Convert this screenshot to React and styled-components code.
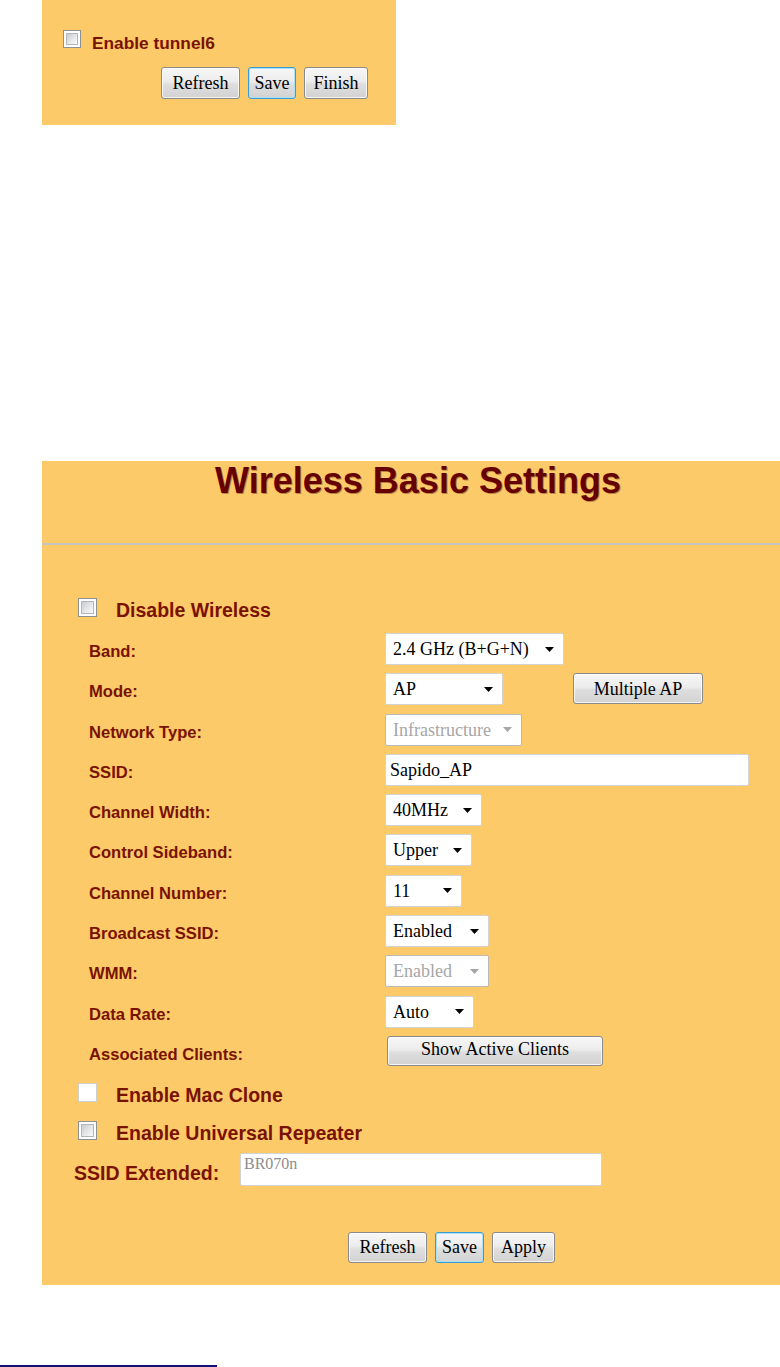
import React from 'react';
import styled, { createGlobalStyle, css } from 'styled-components';

const ORANGE = '#fcca68';
const MAROON = '#7a1202';
const SANS = '"Liberation Sans", Arial, sans-serif';
const SERIF = '"Liberation Serif", "Times New Roman", serif';

const GlobalStyle = createGlobalStyle`
  html, body { margin: 0; padding: 0; background: #fff; overflow: hidden; }
  body { font-family: ${SANS}; }
`;

const Page = styled.div`
  width: 780px;
  height: 1367px;
  display: flex;
  flex-direction: column;
`;

const TopPanel = styled.section`
  box-sizing: border-box;
  margin-left: 42px;
  width: 354px;
  height: 125px;
  background: ${ORANGE};
  padding: 30px 0 0 21px;
  display: flex;
  flex-direction: column;
`;

const Panel = styled.section`
  margin-top: 336px;
  margin-left: 42px;
  width: 738px;
  height: 824px;
  background: ${ORANGE};
  display: flex;
  flex-direction: column;
`;

const Title = styled.h1`
  margin: 0;
  height: 82px;
  padding-left: 14px;
  font: bold 36px/40px ${SANS};
  color: #660000;
  text-align: center;
  text-shadow: 1px 1px 0 rgba(60, 0, 0, 0.35);
`;

const Divider = styled.div`
  height: 2px;
  background: #c4c4c4;
`;

const CheckRow = styled.label`
  display: flex;
  align-items: flex-start;
  gap: ${(p) => p.$gap ?? 19}px;
  margin-top: ${(p) => p.$top}px;
  padding-left: ${(p) => p.$indent}px;
`;

const CheckBox = styled.span`
  position: relative;
  box-sizing: border-box;
  width: ${(p) => p.$size ?? 19}px;
  height: ${(p) => p.$size ?? 19}px;
  flex: none;
  border: 1px solid ${(p) => (p.$plain ? '#cfcfcf' : '#8e8f8f')};
  background: #fff;
  ${(p) =>
    !p.$plain &&
    css`
      &::after {
        content: '';
        position: absolute;
        inset: 2px;
        border: 1px solid #b2b6bb;
        background: linear-gradient(135deg, #c9ccd1 0%, #e6e7e9 55%, #fbfbfb 100%);
      }
    `}
`;

const CheckText = styled.span`
  margin-top: ${(p) => p.$shift ?? 1}px;
  font: bold ${(p) => p.$size ?? 19.5}px/22px ${SANS};
  color: ${MAROON};
  white-space: nowrap;
`;

const ButtonRow = styled.div`
  display: flex;
  gap: 8px;
  margin-top: ${(p) => p.$top}px;
  padding-left: ${(p) => p.$indent}px;
`;

const Button = styled.button`
  box-sizing: border-box;
  width: ${(p) => p.$w}px;
  height: ${(p) => p.$h ?? 32}px;
  margin: 0;
  margin-left: ${(p) => p.$ml ?? 0}px;
  padding: 0 0 ${(p) => p.$lift ?? 0}px;
  font: 18px/1 ${SERIF};
  color: #000;
  border: 1px solid #8a8a8a;
  border-radius: 3px;
  background: linear-gradient(#f7f7f7 0%, #ececec 45%, #dedede 55%, #d2d2d2 100%);
  box-shadow: inset 0 0 0 1px rgba(255, 255, 255, 0.75);
  white-space: nowrap;
  cursor: default;
  ${(p) =>
    p.$focus &&
    css`
      border-color: #3b9cd4;
      box-shadow: inset 0 0 0 1px #a8e0f8;
    `}
`;

const Form = styled.div`
  margin-top: 12px;
  padding-left: 47px;
  display: flex;
  flex-direction: column;
  gap: 8.3px;
`;

const FormRow = styled.div`
  display: grid;
  grid-template-columns: 296px auto;
  height: 32px;
`;

const Label = styled.span`
  font: bold 16.6px/38px ${SANS};
  color: ${MAROON};
  white-space: nowrap;
`;

const Control = styled.div`
  display: flex;
  align-items: flex-start;
  gap: ${(p) => p.$gap ?? 0}px;
`;

const SelectBox = styled.div`
  box-sizing: border-box;
  width: ${(p) => p.$w}px;
  height: 32px;
  padding: 0 9px 0 7px;
  display: flex;
  align-items: center;
  justify-content: space-between;
  background: #fff;
  border: 1px solid ${(p) => (p.$disabled ? '#b9b9b9' : '#d3d3d3')};
  border-radius: 2px;
  font: 18px/30px ${SERIF};
  color: ${(p) => (p.$disabled ? '#a6a6a6' : '#000')};
  white-space: nowrap;
`;

const TextBox = styled.div`
  box-sizing: border-box;
  width: ${(p) => p.$w}px;
  height: ${(p) => p.$h ?? 32}px;
  padding: ${(p) => (p.$muted ? '1px 0 0 3px' : '0 0 0 4px')};
  background: #fff;
  border: 1px solid #d3d3d3;
  border-radius: 2px;
  font: ${(p) => (p.$muted ? '16px/18px' : '18px/30px')} ${SERIF};
  color: ${(p) => (p.$muted ? '#8c8c8c' : '#000')};
  white-space: nowrap;
`;

const ExtRow = styled.div`
  display: grid;
  grid-template-columns: 166px auto;
  margin-top: 9px;
  padding-left: 32px;
  height: 33px;
`;

const ExtLabel = styled.span`
  font: bold 19.5px/40px ${SANS};
  color: ${MAROON};
  white-space: nowrap;
`;

const Footnote = styled.div`
  margin-top: 80px;
  width: 217px;
  height: 2px;
  background: #10107a;
`;

const Arrow = ({ disabled }) => (
  <svg width="9" height="5" viewBox="0 0 9 5" aria-hidden="true">
    <path d="M0 0 H9 L4.5 5 Z" fill={disabled ? '#a6a6a6' : '#000'} />
  </svg>
);

const Select = ({ w, value, disabled }) => (
  <SelectBox $w={w} $disabled={disabled}>
    <span>{value}</span>
    <Arrow disabled={disabled} />
  </SelectBox>
);

const rows = [
  { label: 'Band:', select: { w: 179, value: '2.4 GHz (B+G+N)' } },
  { label: 'Mode:', select: { w: 118, value: 'AP' }, extra: 'Multiple AP' },
  { label: 'Network Type:', select: { w: 137, value: 'Infrastructure', disabled: true } },
  { label: 'SSID:', input: 'Sapido_AP' },
  { label: 'Channel Width:', select: { w: 97, value: '40MHz' } },
  { label: 'Control Sideband:', select: { w: 87, value: 'Upper' } },
  { label: 'Channel Number:', select: { w: 77, value: '11' } },
  { label: 'Broadcast SSID:', select: { w: 104, value: 'Enabled' } },
  { label: 'WMM:', select: { w: 104, value: 'Enabled', disabled: true } },
  { label: 'Data Rate:', select: { w: 89, value: 'Auto' } },
  { label: 'Associated Clients:', button: 'Show Active Clients' },
];

export default function App() {
  return (
    <Page>
      <GlobalStyle />
      <TopPanel>
        <CheckRow $top={0} $indent={0} $gap={11}>
          <CheckBox $size={18} />
          <CheckText $size={17.3} $shift={2}>Enable tunnel6</CheckText>
        </CheckRow>
        <ButtonRow $top={13} $indent={98}>
          <Button $w={79}>Refresh</Button>
          <Button $w={48} $focus>Save</Button>
          <Button $w={64}>Finish</Button>
        </ButtonRow>
      </TopPanel>

      <Panel>
        <Title>Wireless Basic Settings</Title>
        <Divider />
        <CheckRow $top={53} $indent={36}>
          <CheckBox />
          <CheckText>Disable Wireless</CheckText>
        </CheckRow>

        <Form>
          {rows.map((r) => (
            <FormRow key={r.label}>
              <Label>{r.label}</Label>
              <Control $gap={r.extra ? 70 : 0}>
                {r.select && <Select {...r.select} />}
                {r.input && <TextBox $w={364}>{r.input}</TextBox>}
                {r.button && (
                  <Button $w={216} $h={30} $ml={2} $lift={4}>
                    {r.button}
                  </Button>
                )}
                {r.extra && (
                  <Button $w={130} $h={31}>
                    {r.extra}
                  </Button>
                )}
              </Control>
            </FormRow>
          ))}
        </Form>

        <CheckRow $top={15} $indent={36}>
          <CheckBox $plain />
          <CheckText>Enable Mac Clone</CheckText>
        </CheckRow>
        <CheckRow $top={15} $indent={36}>
          <CheckBox />
          <CheckText>Enable Universal Repeater</CheckText>
        </CheckRow>

        <ExtRow>
          <ExtLabel>SSID Extended:</ExtLabel>
          <TextBox $w={362} $h={33} $muted>
            BR070n
          </TextBox>
        </ExtRow>

        <ButtonRow $top={46} $indent={306}>
          <Button $w={79} $h={31}>Refresh</Button>
          <Button $w={49} $h={31} $focus>Save</Button>
          <Button $w={63} $h={31}>Apply</Button>
        </ButtonRow>
      </Panel>

      <Footnote />
    </Page>
  );
}
